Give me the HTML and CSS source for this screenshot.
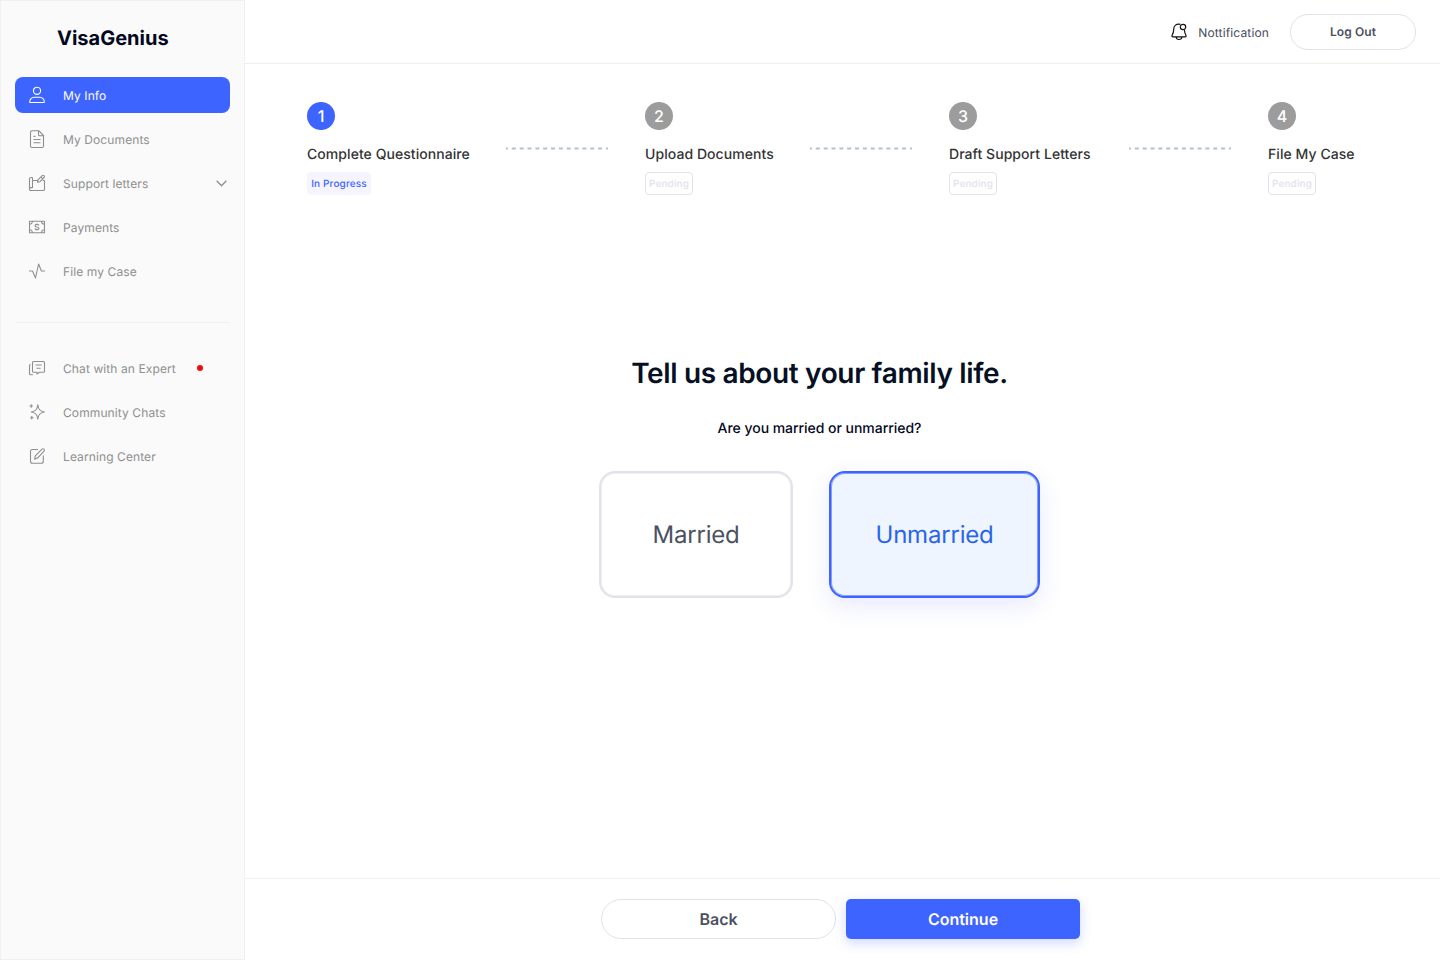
FILE: index.html
```html
<!DOCTYPE html>
<html lang="en">
<head>
<meta charset="utf-8">
<title>VisaGenius</title>
<link rel="stylesheet" href="styles.css">
</head>
<body>
<div class="app">
  <aside class="sidebar">
    <div class="brand">VisaGenius</div>
    <nav class="nav">
      <a class="nav-item active">
        <svg class="icon" viewBox="0 0 16 16"><circle cx="8" cy="3.8" r="3.6"/><path d="M1.1 15.5c-.3 0-.4-.2-.4-.5 0-2.500 2-4.700 4.500-4.700h5.600c2.500 0 4.500 2.200 4.500 4.700 0 .3-.1.500-.4.500z"/></svg>
        <span>My Info</span>
      </a>
      <a class="nav-item">
        <svg class="icon" viewBox="0 0 16 16"><path d="M10 -.2H3A1.500 1.500 0 0 0 1.500 1.300v13.700A1.500 1.500 0 0 0 3 16.500h10a1.500 1.500 0 0 0 1.500-1.500V4.500zM9.500-.2v3.900c0 .6.400 1 1 1h4M4.500 5.400h2M4.500 8.500h7M4.500 11.700h7"/></svg>
        <span>My Documents</span>
      </a>
      <a class="nav-item">
        <svg class="icon" viewBox="0 0 16 16"><path d="M3.500 5.500h5M3.500 2.500H1.800c-.7 0-1.300.6-1.300 1.300v10.400c0 .8.500 1.300 1.300 1.300h12.400c.8 0 1.300-.5 1.300-1.300V5.500h-1.700M1 12.600h2.500V2.500M8.500 7.300l.5-2.500 4.200-4.200c1.300-1 3 .5 1.900 1.900L11 6.700zM12 2l1.900 1.900"/></svg>
        <span>Support letters</span>
        <svg class="chevron" viewBox="0 0 11 7"><path d="M.7.8l4.800 5 4.800-5"/></svg>
      </a>
      <a class="nav-item">
        <svg class="icon" viewBox="0 0 16 16"><path d="M.5 2.300h15v11.400H.5zM.5 5.300a3 3 0 0 0 3-3M12.500 2.300a3 3 0 0 0 3 3M.5 10.700a3 3 0 0 1 3 3M12.500 13.700a3 3 0 0 1 3-3M10 6.400C9.700 5.700 9 5.400 8 5.400c-1.200 0-2 .5-2 1.300C6 8.600 10 7.300 10 9.300c0 .8-.8 1.300-2 1.300-1 0-1.800-.4-2-1.100M8 4.600v.8M8 10.600v.8"/></svg>
        <span>Payments</span>
      </a>
      <a class="nav-item">
        <svg class="icon" viewBox="0 0 16 16"><path d="M0 8h3.500L6.500 15 9.600 1l2.800 7H16"/></svg>
        <span>File my Case</span>
      </a>
    </nav>
    <hr class="rule">
    <nav class="nav">
      <a class="nav-item">
        <svg class="icon" viewBox="0 0 16 16"><path d="M4.500 1.500h10c.6 0 1 .4 1 1v8.700c0 .6-.4 1-1 1h-4L8 14v-1.800H4.500c-.6 0-1-.4-1-1V2.500c0-.6.400-1 1-1zM6.500 5h6.200M7.500 8.300h4.200M1.700 4.500c-.7 0-1.200.5-1.200 1.200v8c0 .6.400 1 1 1h2.500"/></svg>
        <span>Chat with an Expert</span>
        <i class="unread"></i>
      </a>
      <a class="nav-item">
        <svg class="icon" viewBox="0 0 16 16"><path d="M8.800.8c.6 4.500 2 6.300 6.700 7.200-4.700.9-6.100 2.700-6.700 7.200C8.200 10.700 6.900 8.900 2.300 8c4.600-.9 5.900-2.700 6.500-7.200zM2.200.3v3.400M.5 2h3.400M2.800 12v3.400M1.100 13.700h3.400"/></svg>
        <span>Community Chats</span>
      </a>
      <a class="nav-item">
        <svg class="icon" viewBox="0 0 16 16"><path d="M9 1.500H3.500c-1.100 0-2 .9-2 2v9.700c0 1.100.9 2 2 2h8.800c1.100 0 2-.9 2-2V7.500M5.700 11.200l.6-3.300L13 1.200c1.300-1.200 3.200.6 2 2L8.800 9.800z"/></svg>
        <span>Learning Center</span>
      </a>
    </nav>
  </aside>
  <div class="page">
    <header class="topbar">
      <svg class="bell" viewBox="0 0 16 18"><path d="M9.500 1.300C5.300.2 2.700 3 2.700 6.300c0 3.200-.5 4.300-1.600 6-.5.900-.1 1.500.8 1.500h12.200c.9 0 1.300-.6.800-1.500-.8-1.500-1.300-2.800-1.500-5.500M5 14c.2 1.500 1.400 2.500 3 2.500s2.800-1 3-2.500"/><circle cx="12" cy="4" r="2.700"/></svg>
      <span class="notice">Nottification</span>
      <button class="logout">Log Out</button>
    </header>
    <main class="content">
      <section class="steps">
        <div class="step step-1"><b class="num current">1</b><span class="name">Complete Questionnaire</span><span class="tag progress">In Progress</span></div>
        <svg class="link" viewBox="0 0 102 2"><path d="M0 .5h102"/></svg>
        <div class="step step-2"><b class="num">2</b><span class="name">Upload Documents</span><span class="tag">Pending</span></div>
        <svg class="link" viewBox="0 0 102 2"><path d="M0 .5h102"/></svg>
        <div class="step step-3"><b class="num">3</b><span class="name">Draft Support Letters</span><span class="tag">Pending</span></div>
        <svg class="link" viewBox="0 0 102 2"><path d="M0 .5h102"/></svg>
        <div class="step step-4"><b class="num">4</b><span class="name">File My Case</span><span class="tag">Pending</span></div>
      </section>
      <section class="question">
        <h1 class="title">Tell us about your family life.</h1>
        <p class="prompt">Are you married or unmarried?</p>
        <div class="choices">
          <button class="choice">Married</button>
          <button class="choice selected">Unmarried</button>
        </div>
      </section>
    </main>
    <footer class="actions">
      <button class="back">Back</button>
      <button class="continue">Continue</button>
    </footer>
  </div>
</div>
</body>
</html>
```
FILE: styles.css
```css
* { box-sizing: border-box; }
body { margin: 0; font-family: Inter, "Liberation Sans", sans-serif; color: #030822; background: #fff; text-rendering: geometricPrecision; }
button { font-family: inherit; padding: 0; margin: 0; text-rendering: inherit; }
svg { fill: none; stroke: currentColor; flex: none; overflow: visible; }
.app { display: flex; width: 1440px; height: 960px; overflow: hidden; }

.sidebar { width: 245px; flex: none; background: #fafafa; border: 1px solid #f1f1f2; padding: 22px 14px; }
.brand { padding-left: 42px; height: 54px; font-size: 20px; line-height: 30px; font-weight: 700; letter-spacing: 0; }
.nav { display: flex; flex-direction: column; gap: 8px; }
.nav-item { display: flex; align-items: center; width: 215px; height: 36px; padding-left: 14px; border-radius: 8px; color: #8f8f8f; font-size: 12px; font-weight: 400; letter-spacing: .1px; white-space: nowrap; }
.nav-item span { margin-left: 18px; }
.nav-item.active { background: #3d64ff; color: #fff; }
.icon { width: 16px; height: 16px; stroke-width: 1.100; stroke-linejoin: round; }
.chevron { width: 11px; height: 7px; margin-left: auto; margin-right: 3px; stroke-width: 1.300; }
.rule { width: 215px; height: 1px; border: 0; margin: 33px 0 27px; background: #f0f0f1; }
.unread { width: 6px; height: 6px; margin-left: 21px; border-radius: 50%; background: #f00b0b; }

.page { flex: 1; display: flex; flex-direction: column; }
.topbar { height: 64px; display: flex; align-items: center; justify-content: flex-end; padding-right: 24px; border-bottom: 1px solid #eeeeef; }
.bell { width: 16px; height: 18px; color: #111; stroke-width: 1.200; }
.notice { margin: 1px 21px 0 11px; color: #454b5c; font-size: 12px; font-weight: 400; letter-spacing: .14px; }
.logout { width: 126px; height: 36px; border: 1px solid #e1e1eb; border-radius: 18px; background: #fff; color: #4b5162; font-size: 12px; font-weight: 600; letter-spacing: .1px; }

.content { flex: 1; }
.steps { display: flex; align-items: flex-start; gap: 37px; padding: 38px 0 0 62px; }
.step { display: flex; flex-direction: column; align-items: flex-start; white-space: nowrap; }
.step-1 { width: 162px; }
.step-2 { width: 128px; }
.step-3 { width: 143px; }
.step-4 { width: 86px; }
.num { width: 28px; height: 28px; border-radius: 50%; background: #9c9c9c; color: #fff; font-size: 16px; font-weight: 500; line-height: 28px; text-align: center; }
.num.current { background: #3d64ff; }
.name { margin-top: 15px; color: #333; font-size: 14px; line-height: 20px; font-weight: 500; letter-spacing: .06px; }
.tag { margin-top: 7px; width: 48px; height: 23px; padding-top: 1px; border: 1px solid #e2e2ed; border-radius: 4px; color: #e2e2ed; font-size: 10px; line-height: 21px; font-weight: 500; letter-spacing: .15px; text-align: center; }
.tag.progress { width: 64px; background: #f5f4ff; border-color: #f5f4ff; color: #3d64ff; }
.link { width: 102px; height: 2px; margin-top: 46px; color: #b2c4cb; stroke-width: 2; stroke-dasharray: 4 3.840; stroke-dashoffset: 2; }

.question { display: flex; flex-direction: column; align-items: center; padding: 158px 46px 0 0; }
.title { margin: 0; font-size: 28px; line-height: 40px; font-weight: 600; letter-spacing: -.35px; color: #061024; white-space: nowrap; }
.prompt { margin: 26px 0 0; font-size: 14px; line-height: 20px; font-weight: 500; letter-spacing: -.04px; }
.choices { display: flex; gap: 36px; margin-top: 32px; }
.choice { width: 194px; height: 127px; border: 2px solid #e1e3e9; border-radius: 16px; background: #fff; color: #4b5162; font-size: 24px; font-weight: 400; letter-spacing: -.2px; box-shadow: inset 0 0 0 1px rgba(225, 227, 233, .6); }
.choice.selected { width: 211px; border-color: #3d64ff; background: #eff5ff; color: #2964eb; box-shadow: inset 0 0 0 1px rgba(61, 100, 255, .6), 0 8px 24px rgba(61, 70, 255, .12); }

.actions { height: 82px; display: flex; gap: 10px; padding: 20px 0 0 356px; border-top: 1px solid #f0f0f1; }
.back, .continue { height: 40px; font-size: 16px; font-weight: 600; }
.back { width: 235px; border: 1px solid #e1e1eb; border-radius: 20px; background: #fff; color: #4b5162; }
.continue { width: 234px; border: 0; border-radius: 5px; background: #3d64ff; color: #fff; box-shadow: 0 4px 12px rgba(61, 100, 255, .25); }
```
